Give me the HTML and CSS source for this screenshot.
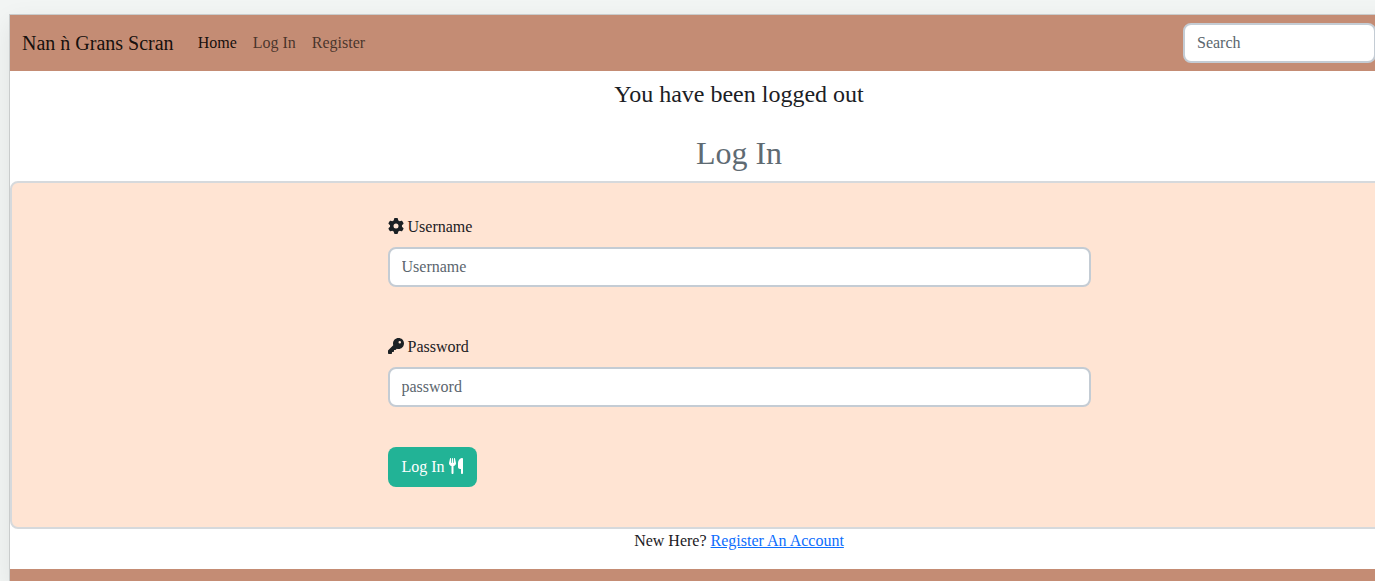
FILE: index.html
```html
<!DOCTYPE html>
<html lang="en">
<head>
<meta charset="utf-8">
<title>Nan ǹ Grans Scran</title>
<link rel="stylesheet" href="styles.css">
</head>
<body>
<div class="site">
  <nav class="navbar">
    <a class="brand" href="#">Nan ǹ Grans Scran</a>
    <a class="nav-link active" href="#">Home</a>
    <a class="nav-link" href="#">Log In</a>
    <a class="nav-link" href="#">Register</a>
    <form class="search"><input class="field" type="search" placeholder="Search" aria-label="Search"></form>
  </nav>
  <main>
    <h4 class="flash">You have been logged out</h4>
    <h2 class="title">Log In</h2>
    <section class="card">
      <form class="login">
        <div class="group">
          <label class="label" for="username">
            <svg class="icon" viewBox="0 0 512 512" aria-hidden="true"><path d="M495.900 166.600c3.200 8.700.5 18.400-6.400 24.600l-43.300 39.400c1.100 8.300 1.700 16.800 1.700 25.400s-.6 17.100-1.700 25.400l43.300 39.400c6.900 6.200 9.600 15.900 6.400 24.600-4.400 11.900-9.700 23.300-15.800 34.300l-4.700 8.100c-6.600 11-14 21.400-22.100 31.200-5.900 7.200-15.700 9.600-24.500 6.800l-55.700-17.700c-13.400 10.300-28.200 18.900-44 25.400l-12.500 57.100c-2 9.100-9 16.300-18.200 17.800-13.800 2.300-28 3.500-42.500 3.500s-28.700-1.200-42.500-3.500c-9.200-1.500-16.200-8.700-18.200-17.800l-12.500-57.100c-15.800-6.500-30.600-15.100-44-25.400L83.100 425.900c-8.800 2.800-18.600.3-24.500-6.800-8.100-9.800-15.500-20.200-22.100-31.200l-4.700-8.100c-6.100-11-11.400-22.400-15.800-34.300-3.200-8.700-.5-18.400 6.400-24.600l43.300-39.400C64.600 273.100 64 264.600 64 256s.6-17.100 1.700-25.400L22.400 191.200c-6.900-6.200-9.600-15.900-6.400-24.600 4.400-11.900 9.700-23.300 15.800-34.300l4.700-8.100c6.600-11 14-21.400 22.100-31.200 5.900-7.200 15.700-9.600 24.500-6.800l55.700 17.700c13.400-10.300 28.200-18.900 44-25.400l12.500-57.100c2-9.100 9-16.300 18.200-17.800C227.300 1.200 241.500 0 256 0s28.700 1.200 42.500 3.500c9.200 1.500 16.200 8.700 18.200 17.800l12.500 57.100c15.800 6.500 30.600 15.100 44 25.400l55.700-17.700c8.800-2.800 18.600-.3 24.500 6.800 8.100 9.800 15.500 20.200 22.100 31.200l4.700 8.100c6.100 11 11.400 22.400 15.800 34.300zM256 336a80 80 0 1 0 0-160 80 80 0 1 0 0 160z"/></svg>
            Username</label>
          <input class="field" id="username" type="text" placeholder="Username">
        </div>
        <div class="group">
          <label class="label" for="password">
            <svg class="icon" viewBox="0 0 512 512" aria-hidden="true"><path d="M336 352c97.200 0 176-78.800 176-176S433.200 0 336 0 160 78.800 160 176c0 18.700 2.900 36.800 8.300 53.700L7 391c-4.500 4.500-7 10.600-7 17v80c0 13.300 10.700 24 24 24h80c13.300 0 24-10.700 24-24v-40h40c13.300 0 24-10.700 24-24v-40h40c6.400 0 12.500-2.500 17-7l33.300-33.300c16.900 5.400 35 8.300 53.700 8.300zM376 96a40 40 0 1 1 0 80 40 40 0 1 1 0-80z"/></svg>
            Password</label>
          <input class="field" id="password" type="password" placeholder="password">
        </div>
        <button class="button" type="submit">Log In
          <svg class="icon cutlery" viewBox="0 0 448 512" aria-hidden="true"><path d="M416 0C400 0 288 32 288 176v112c0 35.300 28.700 64 64 64h32v128c0 17.700 14.300 32 32 32s32-14.300 32-32V32c0-17.700-14.300-32-32-32zM64 16C64 7.800 57.900 1 49.700.1S34.200 4.600 32.400 12.500L2.100 148.800C.7 155.100 0 161.500 0 167.900c0 45.900 35.100 83.600 80 87.700V480c0 17.700 14.300 32 32 32s32-14.300 32-32V255.600c44.900-4.100 80-41.800 80-87.700 0-6.400-.7-12.800-2.100-19.100L191.600 12.500C189.800 4.600 182.500-.8 174.300.1S160 7.800 160 16v134.200c0 5.400-4.400 9.800-9.800 9.800-5.100 0-9.300-3.900-9.800-9L127.900 14.600C127.200 6.300 120.300 0 112 0S96.800 6.300 96.100 14.600L83.700 151c-.5 5.100-4.700 9-9.800 9-5.400 0-9.800-4.400-9.800-9.800V16z"/></svg></button>
      </form>
    </section>
    <p class="note">New Here? <a class="link" href="#">Register An Account</a></p>
  </main>
  <footer class="footer"></footer>
</div>
</body>
</html>
```
FILE: styles.css
```css
* { box-sizing: border-box; }

html { height: 100%; overflow: hidden; }

body {
  display: flex;
  flex-direction: column;
  margin: 0;
  height: 100%;
  padding: 14px 0 0 9px;
  overflow: hidden;
  background: #f2f5f4;
  color: #1b2024;
  font: 16px/24px "Liberation Serif", "Times New Roman", serif;
}

/* The site is wider than the window and runs off its right edge. */
.site {
  display: flex;
  flex: 1;
  flex-direction: column;
  margin-right: -94px;
  border: 1px solid #c9cccc;
  border-bottom: 0;
  background: #fff;
  box-shadow: 0 8px 24px rgba(0, 0, 0, 0.08);
}

.navbar {
  display: flex;
  align-items: center;
  padding: 8px 92px 8px 12px;
  background: #c48c74;
}

.brand {
  margin-right: 16px;
  color: rgba(0, 0, 0, 0.9);
  font-size: 20px;
  text-decoration: none;
}

.nav-link {
  padding: 0 8px;
  color: rgba(0, 0, 0, 0.65);
  text-decoration: none;
}

.nav-link.active { color: rgba(0, 0, 0, 0.9); }

.search { width: 193px; margin-left: auto; }

.field {
  display: block;
  width: 100%;
  margin: 0;
  padding: 6px 12px;
  border: 2px solid #c4ccd4;
  border-radius: 8px;
  background: #fff;
  color: #212529;
  font: inherit;
  line-height: 24px;
  appearance: none;
}

.field::placeholder { color: #5b666e; opacity: 1; }

.flash {
  margin: 0;
  padding: 8px 0 24px;
  font-size: 24px;
  font-weight: 400;
  line-height: 30px;
  text-align: center;
}

.title {
  margin: 0 0 8px;
  color: #5f6b73;
  font-size: 32px;
  font-weight: 400;
  line-height: 40px;
  text-align: center;
}

.card {
  padding: 32px 0 40px;
  border: 2px solid #d6d9dc;
  border-radius: 8px;
  background: #ffe4d3;
}

.login {
  width: 50%;
  margin: 0 auto;
  padding: 0 12px;
}

.group { margin-bottom: 48px; }
.group + .group { margin-bottom: 40px; }

.label { display: block; margin-bottom: 8px; }

.icon {
  width: 16px;
  height: 16px;
  fill: currentColor;
  vertical-align: -2px;
}

.icon.cutlery { width: 14px; }

.button {
  display: block;
  padding: 8px 14px;
  border: 0;
  border-radius: 8px;
  background: #22b396;
  color: #fff;
  font: inherit;
}

.note { margin: 0 0 16px; text-align: center; }

.link { color: #0d6efd; }

.footer { flex: 1; background: #c48c74; }
```
